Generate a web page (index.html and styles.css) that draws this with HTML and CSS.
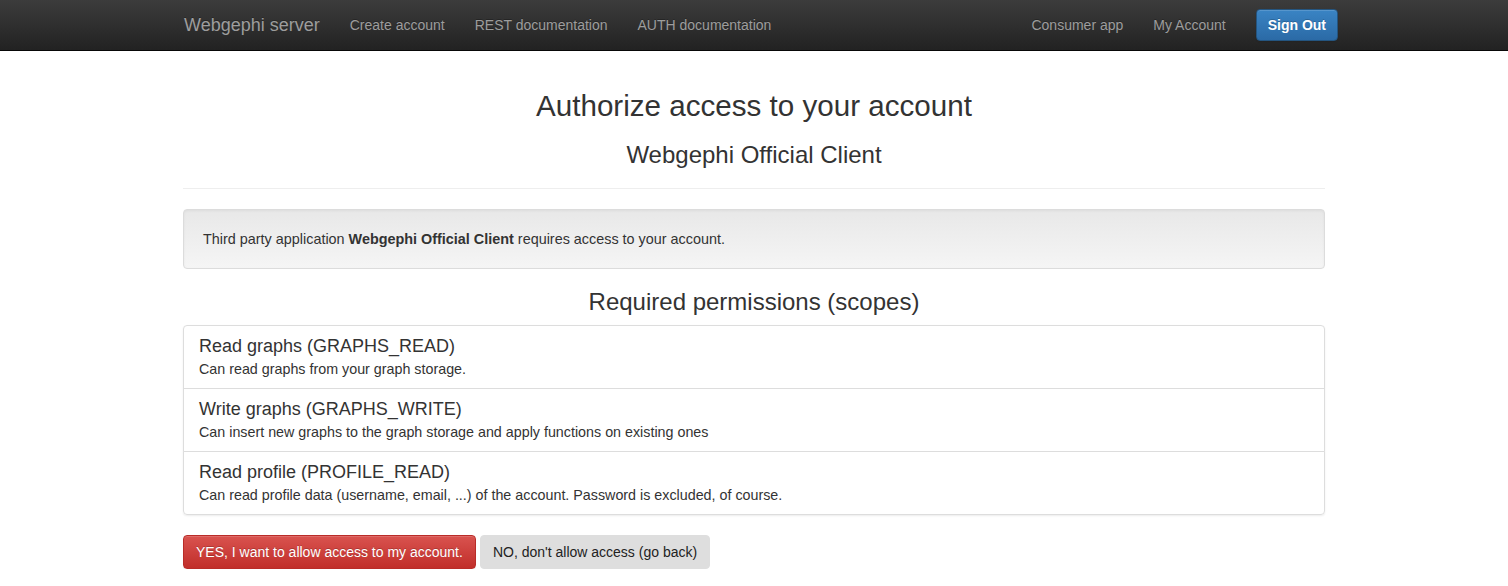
FILE: index.html
```html
<!DOCTYPE html>
<html lang="en">
<head>
<meta charset="utf-8">
<title>Authorize access</title>
<link rel="stylesheet" href="styles.css">
</head>
<body>
<nav class="navbar">
  <div class="nav-container">
    <div class="nav-left">
      <a class="brand" href="#">Webgephi server</a>
      <a class="nav-link" href="#">Create account</a>
      <a class="nav-link" href="#">REST documentation</a>
      <a class="nav-link" href="#">AUTH documentation</a>
    </div>
    <div class="nav-right">
      <a class="nav-link" href="#">Consumer app</a>
      <a class="nav-link" href="#">My Account</a>
      <button class="btn-signout" type="button">Sign Out</button>
    </div>
  </div>
</nav>
<main class="container">
  <h2 class="title">Authorize access to your account</h2>
  <h3 class="subtitle">Webgephi Official Client</h3>
  <hr class="sep">
  <div class="well">Third party application <strong>Webgephi Official Client</strong> requires access to your account.</div>
  <h3 class="subtitle perms">Required permissions (scopes)</h3>
  <div class="list-group">
    <div class="list-item">
      <h4 class="item-heading">Read graphs (GRAPHS_READ)</h4>
      <p class="item-text">Can read graphs from your graph storage.</p>
    </div>
    <div class="list-item">
      <h4 class="item-heading">Write graphs (GRAPHS_WRITE)</h4>
      <p class="item-text">Can insert new graphs to the graph storage and apply functions on existing ones</p>
    </div>
    <div class="list-item">
      <h4 class="item-heading">Read profile (PROFILE_READ)</h4>
      <p class="item-text">Can read profile data (username, email, ...) of the account. Password is excluded, of course.</p>
    </div>
  </div>
  <div class="actions">
    <button class="btn btn-danger" type="button">YES, I want to allow access to my account.</button>
    <button class="btn btn-gray" type="button">NO, don't allow access (go back)</button>
  </div>
</main>
</body>
</html>
```

FILE: styles.css
```css
* { box-sizing: border-box; }
html, body { margin: 0; padding: 0; }
body {
  font-family: "Liberation Sans", Arial, Helvetica, sans-serif;
  font-size: 14px;
  line-height: 20px;
  color: #333;
  background: #fff;
}
.navbar {
  height: 51px;
  background: linear-gradient(to bottom, #3c3c3c 0%, #222 100%);
  border-bottom: 1px solid #080808;
  margin-bottom: 20px;
}
.nav-container {
  width: 1170px;
  margin: 0 auto;
  display: flex;
  justify-content: space-between;
  align-items: flex-start;
  height: 50px;
}
.nav-left, .nav-right {
  display: flex;
  align-items: flex-start;
}
.brand {
  display: block;
  padding: 15px;
  font-size: 18px;
  line-height: 20px;
  color: #9d9d9d;
  text-decoration: none;
  text-shadow: 0 -1px 0 rgba(0,0,0,.25);
}
.nav-link {
  display: block;
  padding: 15px;
  line-height: 20px;
  color: #9d9d9d;
  text-decoration: none;
  text-shadow: 0 -1px 0 rgba(0,0,0,.25);
}
.btn-signout {
  margin: 9px 1px 0 15px;
  height: 32px;
  padding: 5px 11px;
  font-family: inherit;
  font-size: 14px;
  font-weight: bold;
  line-height: 20px;
  color: #fff;
  background: linear-gradient(to bottom, #3a84c4 0%, #2b6aa6 100%);
  border: 1px solid #245580;
  border-radius: 4px;
  text-shadow: 0 -1px 0 rgba(0,0,0,.2);
  box-shadow: inset 0 1px 0 rgba(255,255,255,.15), 0 1px 1px rgba(0,0,0,.075);
}
.container {
  width: 1142px;
  margin: 0 auto;
}
.title {
  margin: 38px 0 10px;
  font-size: 29.6px;
  font-weight: 500;
  line-height: 33px;
  text-align: center;
  color: #333;
}
.subtitle {
  margin: 20px 0 10px;
  font-size: 24px;
  font-weight: 500;
  line-height: 26px;
  text-align: center;
  color: #333;
}
.perms { margin-top: 20px; }
.sep {
  margin: 20px 0;
  border: 0;
  border-top: 1px solid #eee;
}
.well {
  min-height: 20px;
  padding: 19px;
  margin-bottom: 20px;
  font-size: 14.4px;
  background: linear-gradient(to bottom, #e8e8e8 0%, #f5f5f5 100%);
  border: 1px solid #dcdcdc;
  border-radius: 4px;
  box-shadow: inset 0 1px 3px rgba(0,0,0,.05), 0 1px 0 rgba(255,255,255,.1);
}
.list-group {
  margin-bottom: 20px;
  border-radius: 4px;
  box-shadow: 0 1px 2px rgba(0,0,0,.075);
}
.list-item {
  padding: 10px 15px;
  background: #fff;
  border: 1px solid #ddd;
  margin-bottom: -1px;
}
.list-item:first-child { border-radius: 4px 4px 0 0; }
.list-item:last-child { border-radius: 0 0 4px 4px; margin-bottom: 0; }
.item-heading {
  margin: 0 0 5px;
  font-size: 18px;
  font-weight: 500;
  line-height: 20px;
  color: #333;
}
.item-text {
  margin: 0;
  font-size: 14.3px;
  line-height: 17px;
}
.actions {
  display: flex;
  gap: 4px;
}
.btn {
  height: 34px;
  padding: 6px 12px;
  font-family: inherit;
  font-size: 14px;
  line-height: 20px;
  border-radius: 4px;
  border: 1px solid transparent;
}
.btn-danger {
  color: #fff;
  background: linear-gradient(to bottom, #d9534f 0%, #c12e2a 100%);
  border-color: #b92c28;
  text-shadow: 0 -1px 0 rgba(0,0,0,.2);
  box-shadow: inset 0 1px 0 rgba(255,255,255,.15), 0 1px 1px rgba(0,0,0,.075);
}
.btn-gray {
  color: #222;
  background: #dedede;
  border-color: #dedede;
}
```
